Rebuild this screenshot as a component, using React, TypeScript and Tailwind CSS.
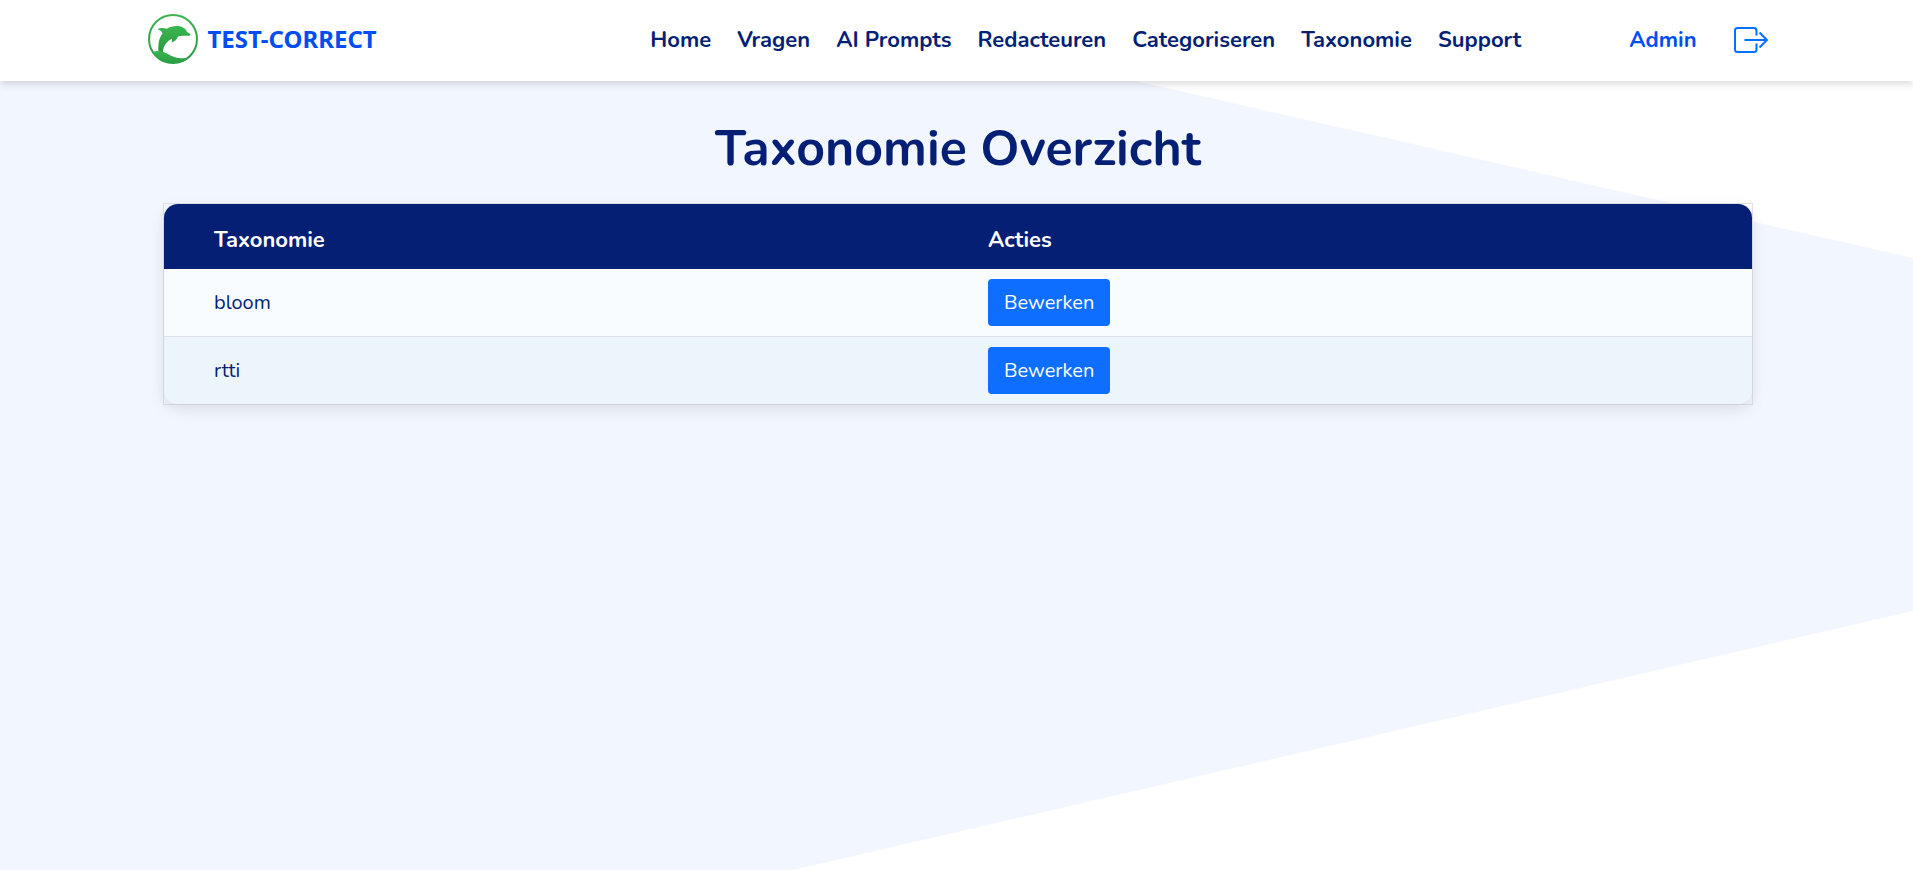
import React from "react";

const navItems = ["Home", "Vragen", "AI Prompts", "Redacteuren", "Categoriseren", "Taxonomie", "Support"];
const rows = ["bloom", "rtti"];

function DolphinMark() {
  return (
    <svg width="52" height="52" viewBox="0 0 52 52" aria-hidden="true">
      <defs>
        <linearGradient id="mark" x1="0" y1="0" x2="0" y2="1">
          <stop offset="0" stopColor="#3ab54f" />
          <stop offset="1" stopColor="#289a41" />
        </linearGradient>
        <clipPath id="disc"><circle cx="26" cy="26" r="24" /></clipPath>
      </defs>
      <circle cx="26" cy="26" r="24" fill="white" stroke="url(#mark)" strokeWidth="2" />
      <path
        fill="url(#mark)"
        d="M11.500 39C11 32 11.500 25.500 15.500 20.500C15 18.500 13.500 17 10.300 16.200C13 14.600 17 14.600 20 15.800C24 13 31 12 36 14.500C38.500 15.700 39.500 17.500 40 19C41.500 20 43.300 20.700 43.500 21.500C43.300 22.600 41.800 22.800 40 22.700C37 22.700 34 22.700 31 23.500C30 26 28 28.700 24.500 29.500C25 27.500 25.300 26.500 24.700 25.700C20 28.500 16 32.500 16 39Z"
      />
      <path clipPath="url(#disc)" fill="url(#mark)" d="M0 41C8 37 14 37 20 40.500C26 44.500 32 46 39 45L39 52H0Z" />
    </svg>
  );
}

function LogoutIcon() {
  return (
    <svg width="36" height="28" viewBox="0 0 36 28" fill="none" stroke="#0071ff" strokeWidth="2" aria-hidden="true">
      <path d="M23.500 9.500V4.500Q23.500 2 21 2H4.500Q2 2 2 4.500V23.500Q2 26 4.500 26H21Q23.500 26 23.500 23.500V17.500" />
      <path d="M11.500 14H34M26.500 6.500L34 14L26.500 21.500" />
    </svg>
  );
}

export default function App() {
  return (
    <div className="relative isolate min-h-screen bg-[#f2f6ff] font-[Nunito,Lato,sans-serif] text-[#041f74]">
      <svg className="absolute inset-0 -z-10 h-full w-full" viewBox="0 0 1913 870" preserveAspectRatio="none" aria-hidden="true">
        <path fill="white" d="M780 0H1913V258ZM1913 611V870H793Z" />
      </svg>

      <header className="relative bg-white shadow-[0_3px_8px_rgba(0,0,0,0.15)]">
        <div className="mx-auto flex h-[81px] w-[85%] items-center pb-1">
          <a href="#" className="flex items-center gap-2 pl-1 font-['Noto_Sans'] text-2xl font-bold text-[#004df5]">
            <DolphinMark />
            TEST-CORRECT
          </a>
          <nav className="ml-auto flex gap-[26px] pt-1 text-[22px] font-bold">
            {navItems.map((item) => (
              <a key={item} href="#">{item}</a>
            ))}
          </nav>
          <div className="ml-[108px] flex items-center gap-9 pt-0.5 pr-px">
            <a href="#" className="pt-0.5 text-[22px] font-bold text-[#004df5]">Admin</a>
            <button type="button" aria-label="Uitloggen"><LogoutIcon /></button>
          </div>
        </div>
      </header>

      <main className="pt-9 pr-[160px] pl-[163px]">
        <h1 className="text-center text-[50px] leading-[64px] font-bold">Taxonomie Overzicht</h1>
        <div className="mt-[22px] border border-[#dee2e6]">
          <div className="overflow-hidden rounded-[14px] shadow-[0_5px_15px_rgba(0,0,0,0.1)]">
            <table className="w-full table-fixed border-separate border-spacing-0 text-left text-xl">
              <thead className="bg-[#041f74] text-[22px] text-white">
                <tr className="h-[65px]">
                  <th className="w-[774px] pt-2 pl-[50px] font-bold">Taxonomie</th>
                  <th className="pt-2 pl-[50px] font-bold">Acties</th>
                </tr>
              </thead>
              <tbody>
                {rows.map((name) => (
                  <tr key={name} className="group h-[68px] bg-[#f8fcff] last:h-[67px] even:bg-[#ecf4fc]">
                    <td className="border-b border-[#dee2e6] pl-[50px] group-last:border-b-0">{name}</td>
                    <td className="border-b border-[#dee2e6] pl-[50px] group-last:border-b-0">
                      <button type="button" className="h-[47px] rounded bg-[#0d6eff] px-4 text-white">Bewerken</button>
                    </td>
                  </tr>
                ))}
              </tbody>
            </table>
          </div>
        </div>
      </main>
    </div>
  );
}
